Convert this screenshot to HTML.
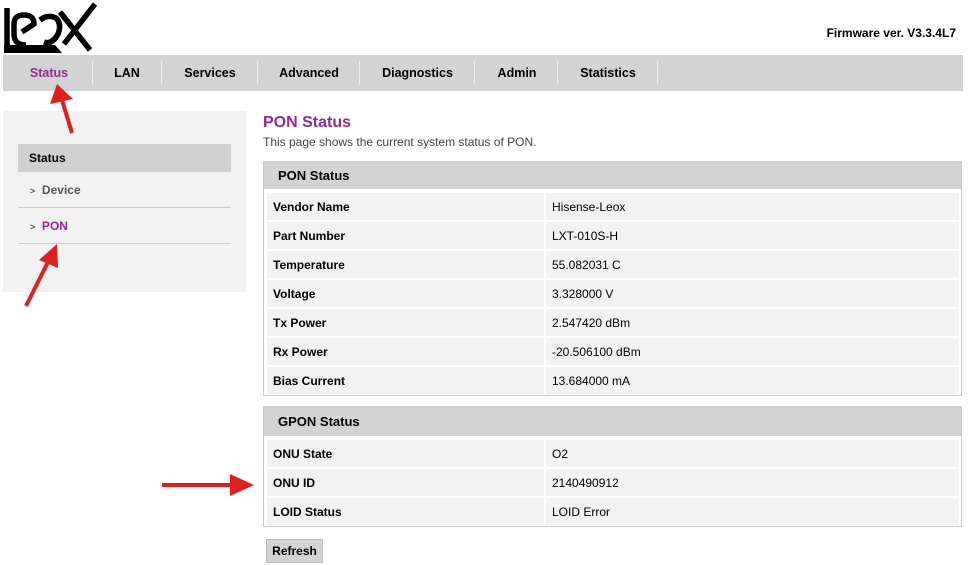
<!DOCTYPE html>
<html><head><meta charset="utf-8"><style>
*{margin:0;padding:0;box-sizing:border-box}
body{width:970px;height:565px;background:#fff;font-family:"Liberation Sans",Arial,sans-serif;font-size:12px;color:#000;position:relative;overflow:hidden}
.a{position:absolute}
.nav{left:3px;top:55px;width:960px;height:36px;background:#d3d3d3}
.nav span{position:absolute;top:0;height:36px;line-height:36px;font-weight:bold;font-size:12.5px;text-align:center}
.sep{position:absolute;top:6px;width:1px;height:24px;background:#a8a8a8;border-right:1px solid #eee}
.side{left:3px;top:111px;width:243px;height:181px;background:#f2f2f2}
.tbl{left:263px;width:699px;border:1px solid #ccc;background:#fff}
.th{height:27px;background:#d3d3d3;font-weight:bold;font-size:13px;line-height:27px;padding-left:14px}
.row{display:flex;margin:2px 2px 0 3px;height:27px}
.row div{background:#f2f2f2;line-height:28px;font-size:12px}
.row .k{width:277px;padding-left:6px;font-weight:bold;margin-right:2px}
.row .v{flex:1;padding-left:6px}
</style></head><body>
<svg class="a" style="left:0;top:0" width="100" height="56" viewBox="0 0 100 56">
<g fill="none" stroke="#000" stroke-width="5.5">
<path d="M7 8 V45"/>
<path d="M14 24 Q14 15 24 15 Q34 15 34 24 L22 32 M14 24 V34 Q14 45 26 45"/>
<path d="M40 20 Q48 14 56 18 Q62 24 58 34 Q52 45 44 42"/>
<path d="M60 12 L90 50 M95 4 L64 44"/>
</g>
<path d="M4 45 L55 45 L62 53 L4 53 Z" fill="#000"/>
</svg>
<div class="a" style="right:14px;top:26px;font-weight:bold;font-size:12px">Firmware ver. V3.3.4L7</div>
<div class="a nav">
<span style="left:0;width:92px;color:#922b8f">Status</span><div class="sep" style="left:89px"></div>
<span style="left:90px;width:68px">LAN</span><div class="sep" style="left:158px"></div>
<span style="left:159px;width:96px">Services</span><div class="sep" style="left:254px"></div>
<span style="left:255px;width:102px">Advanced</span><div class="sep" style="left:356px"></div>
<span style="left:357px;width:115px">Diagnostics</span><div class="sep" style="left:471px"></div>
<span style="left:472px;width:84px">Admin</span><div class="sep" style="left:554px"></div>
<span style="left:555px;width:100px">Statistics</span><div class="sep" style="left:654px"></div>
</div>
<div class="a side"></div>
<div class="a" style="left:18px;top:144px;width:213px;height:28px;background:#d0d0d0;font-weight:bold;line-height:28px;padding-left:11px">Status</div>
<div class="a" style="left:30px;top:183px;color:#555;font-weight:bold;font-size:12px"><span style="font-size:9px">&gt;</span>&nbsp; Device</div>
<div class="a" style="left:18px;top:207px;width:213px;height:1px;background:#ccc"></div>
<div class="a" style="left:30px;top:219px;color:#922b8f;font-weight:bold;font-size:12px"><span style="font-size:9px;color:#555">&gt;</span>&nbsp; PON</div>
<div class="a" style="left:18px;top:243px;width:213px;height:1px;background:#ccc"></div>
<div class="a" style="left:263px;top:114px;color:#922b8f;font-weight:bold;font-size:16px">PON Status</div>
<div class="a" style="left:263px;top:135px;color:#444;font-size:12px">This page shows the current system status of PON.</div>
<div class="a tbl" style="top:161px;height:235px">
<div class="th">PON Status</div>
<div class="row" style="margin-top:4px"><div class="k">Vendor Name</div><div class="v">Hisense-Leox</div></div>
<div class="row"><div class="k">Part Number</div><div class="v">LXT-010S-H</div></div>
<div class="row"><div class="k">Temperature</div><div class="v">55.082031 C</div></div>
<div class="row"><div class="k">Voltage</div><div class="v">3.328000 V</div></div>
<div class="row"><div class="k">Tx Power</div><div class="v">2.547420 dBm</div></div>
<div class="row"><div class="k">Rx Power</div><div class="v">-20.506100 dBm</div></div>
<div class="row"><div class="k">Bias Current</div><div class="v">13.684000 mA</div></div>
</div>
<div class="a tbl" style="top:406px;height:121px">
<div class="th" style="height:29px;line-height:29px">GPON Status</div>
<div class="row" style="margin-top:4px"><div class="k">ONU State</div><div class="v">O2</div></div>
<div class="row"><div class="k">ONU ID</div><div class="v">2140490912</div></div>
<div class="row"><div class="k">LOID Status</div><div class="v">LOID Error</div></div>
</div>
<div class="a" style="left:266px;top:539px;width:57px;height:24px;background:#d3d3d3;border:1px solid #bbb;font-weight:bold;line-height:22px;text-align:center">Refresh</div>
<svg class="a" style="left:0;top:0" width="970" height="565">
<g stroke="#e02020" stroke-width="4" fill="#e02020">
<line x1="72" y1="133" x2="62" y2="100"/>
<line x1="26" y1="306" x2="48" y2="262"/>
<line x1="162" y1="485" x2="232" y2="485"/>
</g>
<g fill="#e02020">
<polygon points="57,84 50,104 73,99"/>
<polygon points="57,244 39,260 58,268"/>
<polygon points="254,485 230,474 230,496"/>
</g>
</svg>
</body></html>
